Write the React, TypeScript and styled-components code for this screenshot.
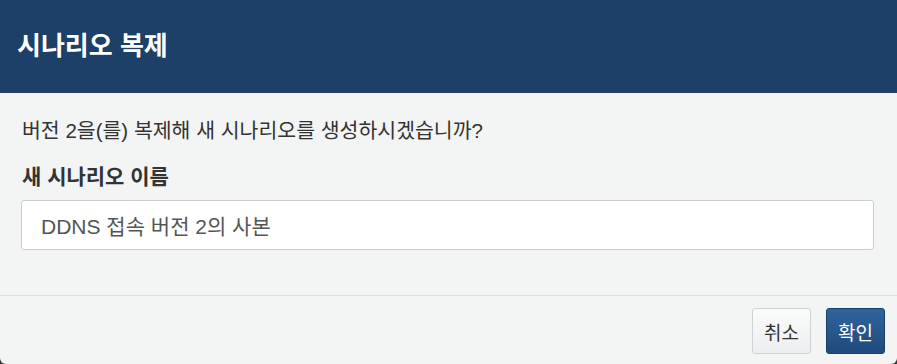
import * as React from "react"
import styled, { createGlobalStyle } from "styled-components"

const GlobalStyle = createGlobalStyle`
  html, body {
    margin: 0;
    padding: 0;
    background: #3a3a3a;
  }
  body {
    font-family: "Liberation Sans", "Noto Sans CJK KR", sans-serif;
  }
`

const Modal = styled.div`
  width: 897px;
  height: 364px;
  display: flex;
  flex-direction: column;
  background: #f3f4f4;
  border-radius: 0 0 6px 6px;
  overflow: hidden;
`

const Header = styled.header`
  height: 93px;
  flex: none;
  display: flex;
  align-items: center;
  padding: 0 17px 6px;
  box-sizing: border-box;
  background: #1d4068;
`

const Title = styled.h1`
  margin: 0;
  color: #fff;
  font-size: 26px;
  font-weight: 700;
`

const Body = styled.section`
  flex: 1;
  padding: 24px 22px 0;
  border-bottom: 1px solid #dcdddd;
`

const Message = styled.p`
  margin: 0 0 18px;
  color: #333;
  font-size: 20.5px;
  line-height: 28px;
`

const Label = styled.label`
  display: block;
  margin-bottom: 9px;
  color: #333;
  font-size: 21px;
  line-height: 28px;
  font-weight: 700;
`

const Input = styled.input`
  display: block;
  width: 100%;
  height: 50px;
  box-sizing: border-box;
  margin-left: -1px;
  padding: 0 19px;
  border: 1px solid #cccccc;
  border-radius: 3px;
  background: #fff;
  color: #555;
  font-family: inherit;
  font-size: 21px;
  outline: none;
`

const Footer = styled.footer`
  height: 68px;
  flex: none;
  display: flex;
  justify-content: flex-end;
  align-items: flex-start;
  gap: 15px;
  padding: 12px 12px 0 0;
  box-sizing: border-box;
`

const Button = styled.button<{ primary?: boolean }>`
  height: 46px;
  padding: 0 11px;
  border-radius: 3px;
  font-family: inherit;
  font-size: 19px;
  cursor: pointer;
  ${({ primary }) =>
    primary
      ? `
    color: #fff;
    border: 1px solid #1a3f68;
    background: linear-gradient(#30639b, #1f4b7c);
  `
      : `
    color: #333;
    border: 1px solid #cfd2d4;
    background: linear-gradient(#fbfbfb, #eceeef);
  `}
`

export default function App() {
  const [name, setName] = React.useState("DDNS 접속 버전 2의 사본")
  return (
    <>
      <GlobalStyle />
      <Modal>
        <Header>
          <Title>시나리오 복제</Title>
        </Header>
        <Body>
          <Message>버전 2을(를) 복제해 새 시나리오를 생성하시겠습니까?</Message>
          <Label htmlFor="scenario-name">새 시나리오 이름</Label>
          <Input id="scenario-name" value={name} onChange={(e) => setName(e.target.value)} />
        </Body>
        <Footer>
          <Button>취소</Button>
          <Button primary>확인</Button>
        </Footer>
      </Modal>
    </>
  )
}
